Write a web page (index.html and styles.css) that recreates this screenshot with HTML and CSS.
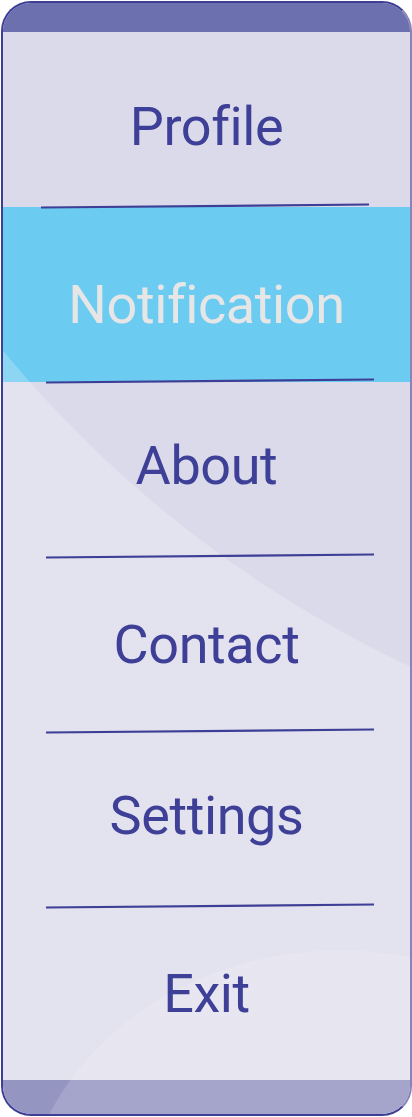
FILE: index.html
```html
<!DOCTYPE html>
<html lang="en">
<head>
<meta charset="utf-8">
<title>Menu</title>
<link rel="stylesheet" href="styles.css">
</head>
<body>
<nav class="menu">
  <div class="menu-top"></div>
  <div class="item item-down-sm"><span class="label">Profile</span></div>
  <div class="divider divider-first"><svg width="332" height="6" viewBox="0 0 332 6"><line x1="0" y1="4.5" x2="328" y2="1.5" /></svg></div>
  <div class="item item-active item-down-lg"><span class="label">Notification</span></div>
  <div class="divider"><svg width="332" height="6" viewBox="0 0 332 6"><line x1="0" y1="4.5" x2="328" y2="1.5" /></svg></div>
  <div class="item item-up"><span class="label">About</span></div>
  <div class="divider"><svg width="332" height="6" viewBox="0 0 332 6"><line x1="0" y1="4.5" x2="328" y2="1.5" /></svg></div>
  <div class="item"><span class="label">Contact</span></div>
  <div class="divider"><svg width="332" height="6" viewBox="0 0 332 6"><line x1="0" y1="4.5" x2="328" y2="1.5" /></svg></div>
  <div class="item item-up"><span class="label">Settings</span></div>
  <div class="divider"><svg width="332" height="6" viewBox="0 0 332 6"><line x1="0" y1="4.5" x2="328" y2="1.5" /></svg></div>
  <div class="item item-last"><span class="label">Exit</span></div>
  <div class="menu-bottom"></div>
</nav>
</body>
</html>
```
FILE: styles.css
```css
html, body {
  margin: 0;
  padding: 0;
  background: #ffffff;
}

.menu {
  position: relative;
  box-sizing: border-box;
  width: 411px;
  height: 1115px;
  margin: 1px 0 0 1px;
  border: 2px solid #3d3f96;
  border-right-color: #8684ba;
  border-radius: 30px;
  overflow: hidden;
  background: #dbdaea;
  display: flex;
  flex-direction: column;
  font-family: Roboto, "Noto Sans", sans-serif;
}

.menu::before {
  content: "";
  position: absolute;
  inset: 0;
  z-index: 1;
  pointer-events: none;
  background: radial-gradient(circle 1176px at 907px -401px, rgba(255,255,255,0) 1175.5px, rgba(255,255,255,0.22) 1176.5px);
}

.menu::after {
  content: "";
  position: absolute;
  inset: 0;
  z-index: 3;
  pointer-events: none;
  background: radial-gradient(ellipse 320px 280px at 337px 1227px, rgba(255,255,255,0.15) 99.6%, rgba(255,255,255,0) 100%);
}

.menu-top {
  flex: 0 0 29px;
  background: #6d70ae;
}

.item {
  box-sizing: border-box;
  flex: 0 0 175px;
  display: flex;
  align-items: center;
  justify-content: center;
}

.item-down-sm {
  padding-top: 13px;
}

.item-down-lg {
  padding-top: 19px;
}

.item-up {
  padding-bottom: 8px;
}

.item-active {
  background: #6ccbf0;
}

.item-last {
  flex-basis: 173px;
}

.label {
  position: relative;
  z-index: 4;
  font-size: 54px;
  font-weight: 400;
  color: #3e3f96;
  letter-spacing: -0.4px;
}

.item-active .label {
  color: #e6e6e6;
}

.divider {
  position: relative;
  z-index: 4;
  height: 0;
  padding-left: 43px;
}

.divider-first {
  padding-left: 38px;
}

.divider svg {
  display: block;
  margin-top: -4px;
}

.divider line {
  stroke: #3d3e95;
  stroke-width: 2.2;
}

.menu-bottom {
  position: relative;
  z-index: 2;
  flex: 0 0 34px;
  background: #9595c2;
}
```
